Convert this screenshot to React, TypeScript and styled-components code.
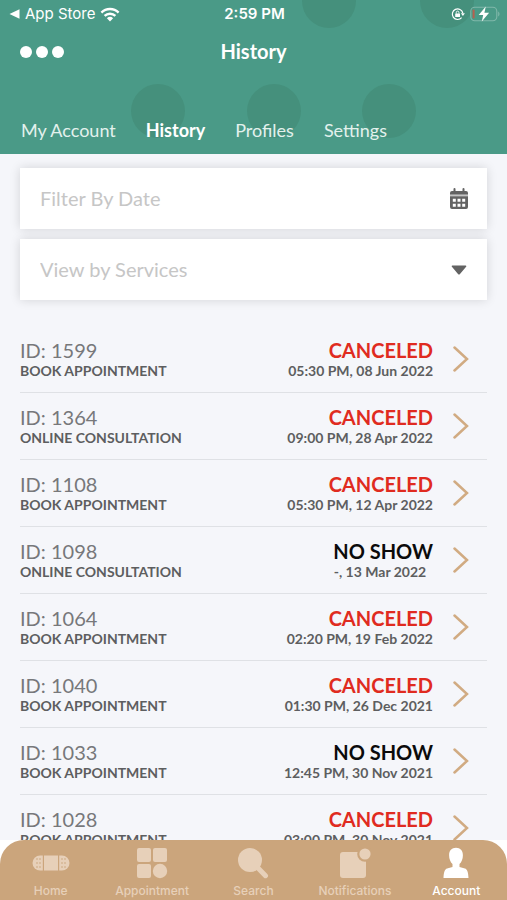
import React from "react";
import styled, { createGlobalStyle, css } from "styled-components";

const GlobalStyle = createGlobalStyle`
  *, *::before, *::after { box-sizing: border-box; }
  body { margin: 0; background: #fff; font-family: Lato, "Open Sans", sans-serif; }
`;

const uiFont = css`
  font-family: Inter, Roboto, sans-serif;
`;

const Screen = styled.div`
  display: flex;
  flex-direction: column;
  height: 100vh;
  background: #fff;
`;

const Header = styled.header`
  position: relative;
  flex: none;
  display: flex;
  flex-direction: column;
  overflow: hidden;
  background: #4a9a87;
  color: #fff;
`;

const Pattern = styled.svg`
  position: absolute;
  top: 0;
  left: 0;
`;

const StatusBar = styled.div`
  ${uiFont}
  position: relative;
  display: grid;
  grid-template-columns: 1fr auto 1fr;
  align-items: center;
  height: 28px;
  padding: 0 7px 0 9px;
  font-size: 14px;
  line-height: 20px;
`;

const StatusGroup = styled.div<{ $end?: boolean }>`
  display: flex;
  align-items: center;
  gap: 5px;
  justify-content: ${(p) => (p.$end ? "flex-end" : "flex-start")};
`;

const AppName = styled.span`
  font-size: 15px;
`;

const Clock = styled.time`
  font-size: 15px;
  font-weight: 600;
`;

const TitleBar = styled.div`
  position: relative;
  display: grid;
  grid-template-columns: 1fr auto 1fr;
  align-items: center;
  height: 46px;
  padding: 0 20px;
`;

const MenuButton = styled.button`
  display: flex;
  gap: 4px;
  justify-self: start;
  padding: 2px 0 0;
  border: 0;
  background: none;
  cursor: pointer;
`;

const Dot = styled.span`
  width: 12px;
  height: 12px;
  border-radius: 50%;
  background: #fff;
`;

const Title = styled.h1`
  margin: 0;
  font-size: 20px;
  line-height: 28px;
  font-weight: 700;
`;

const Tabs = styled.nav`
  position: relative;
  display: flex;
  gap: 30px;
  padding: 44px 21px 12px;
`;

const Tab = styled.a<{ $active?: boolean }>`
  color: ${(p) => (p.$active ? "#fff" : "#e3f1ed")};
  font-size: 18px;
  line-height: 24px;
  font-weight: ${(p) => (p.$active ? 700 : 400)};
  text-decoration: none;
`;

const Content = styled.main`
  flex: 1;
  min-height: 0;
  overflow-y: auto;
  scrollbar-width: none;
  background: #f5f6fa;
`;

const Filters = styled.form`
  display: flex;
  flex-direction: column;
  gap: 10px;
  padding: 14px 20px 26px;
`;

const Field = styled.label`
  display: grid;
  align-items: center;
  height: 61px;
  background: #fff;
  box-shadow: 0 0 10px rgba(0, 0, 0, 0.14);

  > * { grid-area: 1 / 1; }
  > svg { justify-self: end; margin-right: 18px; pointer-events: none; }
`;

const fieldControl = css`
  width: 100%;
  height: 100%;
  padding: 0 52px 1px 20px;
  border: 0;
  border-radius: 0;
  background: transparent;
  color: #c6c6c6;
  font-family: inherit;
  font-size: 20px;
  font-weight: 400;
  appearance: none;
`;

const DateInput = styled.input`
  ${fieldControl}
  &::placeholder { color: #c6c6c6; opacity: 1; }
`;

const ServiceSelect = styled.select`
  ${fieldControl}
`;

const List = styled.ul`
  margin: 0;
  padding: 0 20px;
  list-style: none;
`;

const Item = styled.li`
  border-bottom: 1px solid #dfe1e5;
`;

const Visit = styled.a`
  display: flex;
  align-items: center;
  height: 66px;
  padding-right: 18px;
  color: #5d5e60;
  text-decoration: none;
`;

const VisitColumn = styled.div<{ $end?: boolean }>`
  display: flex;
  flex-direction: column;
  flex: ${(p) => (p.$end ? "none" : "1")};
  align-items: ${(p) => (p.$end ? "flex-end" : "flex-start")};
  margin-right: ${(p) => (p.$end ? 20 : 0)}px;
`;

const VisitId = styled.span`
  color: #77787a;
  font-size: 20px;
  line-height: 24px;
`;

const Status = styled.span<{ $canceled: boolean }>`
  color: ${(p) => (p.$canceled ? "#e02b20" : "#0b0b0b")};
  font-size: 20px;
  line-height: 24px;
  font-weight: 700;
`;

const Detail = styled.span`
  font-size: 14px;
  line-height: 18px;
  font-weight: 700;
  white-space: pre;
`;

const BottomBar = styled.nav`
  ${uiFont}
  flex: none;
  display: grid;
  grid-template-columns: repeat(5, 1fr);
  height: 60px;
  border-radius: 24px 24px 0 0;
  background: #cba57c;
`;

const BottomLink = styled.a<{ $active?: boolean }>`
  display: flex;
  flex-direction: column;
  align-items: center;
  gap: 4px;
  padding-top: 7px;
  color: ${(p) => (p.$active ? "#fff" : "#e7d0b9")};
  font-size: 12px;
  line-height: 16px;
  font-weight: 500;
  text-decoration: none;
`;

const visits = [
  { id: 1599, kind: "BOOK APPOINTMENT", status: "CANCELED", when: "05:30 PM, 08 Jun 2022" },
  { id: 1364, kind: "ONLINE CONSULTATION", status: "CANCELED", when: "09:00 PM, 28 Apr 2022" },
  { id: 1108, kind: "BOOK APPOINTMENT", status: "CANCELED", when: "05:30 PM, 12 Apr 2022" },
  { id: 1098, kind: "ONLINE CONSULTATION", status: "NO SHOW", when: "-, 13 Mar 2022  " },
  { id: 1064, kind: "BOOK APPOINTMENT", status: "CANCELED", when: "02:20 PM, 19 Feb 2022" },
  { id: 1040, kind: "BOOK APPOINTMENT", status: "CANCELED", when: "01:30 PM, 26 Dec 2021" },
  { id: 1033, kind: "BOOK APPOINTMENT", status: "NO SHOW", when: "12:45 PM, 30 Nov 2021" },
  { id: 1028, kind: "BOOK APPOINTMENT", status: "CANCELED", when: "03:00 PM, 30 Nov 2021" },
];

const BackIcon = () => (
  <svg width="11" height="10" viewBox="0 0 11 10" fill="#fff"><path d="M.5 5 10.500.2v9.600z" /></svg>
);

const WifiIcon = () => (
  <svg width="20" height="15" viewBox="0 0 20 15" fill="none" stroke="#fff" strokeWidth="2.400">
    <path d="M1.400 5.600a12.200 12.200 0 0 1 17.200 0" />
    <path d="M4.600 8.900a7.700 7.700 0 0 1 10.800 0" />
    <path d="M10 14.500 6.900 11.300a4.500 4.500 0 0 1 6.200 0z" fill="#fff" stroke="none" />
  </svg>
);

const LockIcon = () => (
  <svg width="14" height="14" viewBox="0 0 14 14" fill="none" stroke="#fff">
    <path d="M10.600 10.700A5.300 5.300 0 1 1 11.800 6" strokeWidth="1.200" />
    <path d="M9.900 6.200h4l-2 2.700z" fill="#fff" stroke="none" />
    <rect x="4.200" y="6.400" width="4.800" height="3.600" rx=".5" fill="#fff" stroke="none" />
    <path d="M5.300 6.600V5.400a1.300 1.300 0 0 1 2.600 0v1.200" strokeWidth=".9" />
  </svg>
);

const BatteryIcon = () => (
  <svg width="30" height="16" viewBox="0 0 30 16">
    <rect x=".8" y="1.300" width="26" height="13.400" rx="4" fill="none" stroke="#80b8aa" strokeWidth="1.100" />
    <path d="M28.200 5.500c1.700.7 1.700 4.300 0 5z" fill="#80b8aa" />
    <rect x="2.600" y="3.400" width="2" height="9.200" rx="1" fill="#b8604f" />
    <path d="M15.800.6 8.700 9h4.500l-1.400 6.400 7.300-8.600h-4.700z" fill="#fff" />
  </svg>
);

const CalendarIcon = () => (
  <svg width="20" height="22" viewBox="0 0 20 22" fill="#636363">
    <path d="M1 6.700V5a2 2 0 0 1 2-2h1.500V1a1 1 0 0 1 2 0v2h7V1a1 1 0 0 1 2 0v2H17a2 2 0 0 1 2 2v1.700z" />
    <path d="M1 6.700h18v1.500H1z" fill="#c4c4c4" />
    <path
      fillRule="evenodd"
      d="M1 8.200h18V19a2 2 0 0 1-2 2H3a2 2 0 0 1-2-2zM3.800 10.700v3h3v-3zm4.700 0v3h3v-3zm4.700 0v3h3v-3zM3.800 15.700v3h3v-3zm4.700 0v3h3v-3zm4.700 0v3h3v-3z"
    />
  </svg>
);

const CaretIcon = () => (
  <svg width="20" height="10" viewBox="0 0 20 10" fill="#636363">
    <path d="M3.400.5h13.200c.7 0 1 .7.500 1.200L11 8.900a1.300 1.300 0 0 1-2 0L2.900 1.700c-.5-.5-.2-1.200.5-1.200z" />
  </svg>
);

const ChevronIcon = () => (
  <svg width="16" height="26" viewBox="0 0 16 26" fill="none" stroke="#d1ab82" strokeWidth="2.500">
    <path d="M1.500 1.500 14 13 1.500 24.500" strokeLinecap="round" />
  </svg>
);

const HomeIcon = () => (
  <svg width="38" height="32" viewBox="0 0 38 32" fill="currentColor">
    <path d="M10.800 8.500H8a7.200 7.200 0 0 0 0 15h2.800z" />
    <path d="M27.200 8.500H30a7.200 7.200 0 0 1 0 15h-2.800z" />
    <rect x="12" y="8.500" width="14" height="15" />
    <g fill="#cba57c">
      {[5, 8, 30, 33].map((x) => [12, 16, 20].map((y) => <circle key={`${x}-${y}`} cx={x} cy={y} r=".8" />))}
    </g>
  </svg>
);

const GridIcon = () => (
  <svg width="32" height="32" viewBox="0 0 32 32" fill="currentColor">
    <rect x="1" y="1" width="14" height="14" rx="2" />
    <rect x="17" y="1" width="14" height="14" rx="2" />
    <rect x="1" y="17" width="14" height="14" rx="2" />
    <circle cx="24" cy="24" r="7.200" />
  </svg>
);

const SearchIcon = () => (
  <svg width="32" height="32" viewBox="0 0 32 32">
    <circle cx="13" cy="13" r="12" fill="currentColor" />
    <path d="m21 21 7.500 7.700" stroke="currentColor" strokeWidth="5" strokeLinecap="round" />
  </svg>
);

const NotificationsIcon = () => (
  <svg width="32" height="32" viewBox="0 0 32 32" fill="currentColor">
    <rect x="1" y="5" width="26" height="26" rx="3" />
    <circle cx="26" cy="7" r="7.800" fill="#cba57c" />
    <circle cx="26" cy="7" r="5.600" />
  </svg>
);

const AccountIcon = () => (
  <svg width="32" height="32" viewBox="0 0 32 32" fill="currentColor">
    <path d="M16 .8c4.300 0 6.900 2.800 6.900 7.400 0 3.700-1.300 7-3.400 8.700v3.200l5.400 1.400c2.300.7 3.300 3.500 3.600 9.500h-25c.3-6 1.300-8.800 3.600-9.500l5.400-1.400v-3.200c-2.100-1.700-3.400-5-3.400-8.700C9.100 3.600 11.700.8 16 .8z" />
  </svg>
);

export default function App() {
  return (
    <>
      <GlobalStyle />
      <Screen>
        <Header>
          <Pattern width="507" height="154" fill="#45907c" aria-hidden="true">
            <circle cx="329" cy="1" r="27" />
            <circle cx="447" cy="1" r="27" />
            <circle cx="158" cy="111" r="27" />
            <circle cx="274" cy="111" r="27" />
            <circle cx="389" cy="111" r="27" />
          </Pattern>
          <StatusBar>
            <StatusGroup>
              <BackIcon />
              <AppName>App Store</AppName>
              <WifiIcon />
            </StatusGroup>
            <Clock>2:59 PM</Clock>
            <StatusGroup $end>
              <LockIcon />
              <BatteryIcon />
            </StatusGroup>
          </StatusBar>
          <TitleBar>
            <MenuButton type="button" aria-label="Menu">
              <Dot />
              <Dot />
              <Dot />
            </MenuButton>
            <Title>History</Title>
          </TitleBar>
          <Tabs>
            <Tab href="#my-account">My Account</Tab>
            <Tab href="#history" $active aria-current="page">History</Tab>
            <Tab href="#profiles">Profiles</Tab>
            <Tab href="#settings">Settings</Tab>
          </Tabs>
        </Header>
        <Content>
          <Filters>
            <Field>
              <DateInput type="text" placeholder="Filter By Date" aria-label="Filter By Date" />
              <CalendarIcon />
            </Field>
            <Field>
              <ServiceSelect aria-label="View by Services">
                <option>View by Services</option>
              </ServiceSelect>
              <CaretIcon />
            </Field>
          </Filters>
          <List>
            {visits.map((v) => (
              <Item key={v.id}>
                <Visit href={`#visit-${v.id}`}>
                  <VisitColumn>
                    <VisitId>ID: {v.id}</VisitId>
                    <Detail>{v.kind}</Detail>
                  </VisitColumn>
                  <VisitColumn $end>
                    <Status $canceled={v.status === "CANCELED"}>{v.status}</Status>
                    <Detail>{v.when}</Detail>
                  </VisitColumn>
                  <ChevronIcon />
                </Visit>
              </Item>
            ))}
          </List>
        </Content>
        <BottomBar>
          <BottomLink href="#home"><HomeIcon />Home</BottomLink>
          <BottomLink href="#appointment"><GridIcon />Appointment</BottomLink>
          <BottomLink href="#search"><SearchIcon />Search</BottomLink>
          <BottomLink href="#notifications"><NotificationsIcon />Notifications</BottomLink>
          <BottomLink href="#account" $active><AccountIcon />Account</BottomLink>
        </BottomBar>
      </Screen>
    </>
  );
}
